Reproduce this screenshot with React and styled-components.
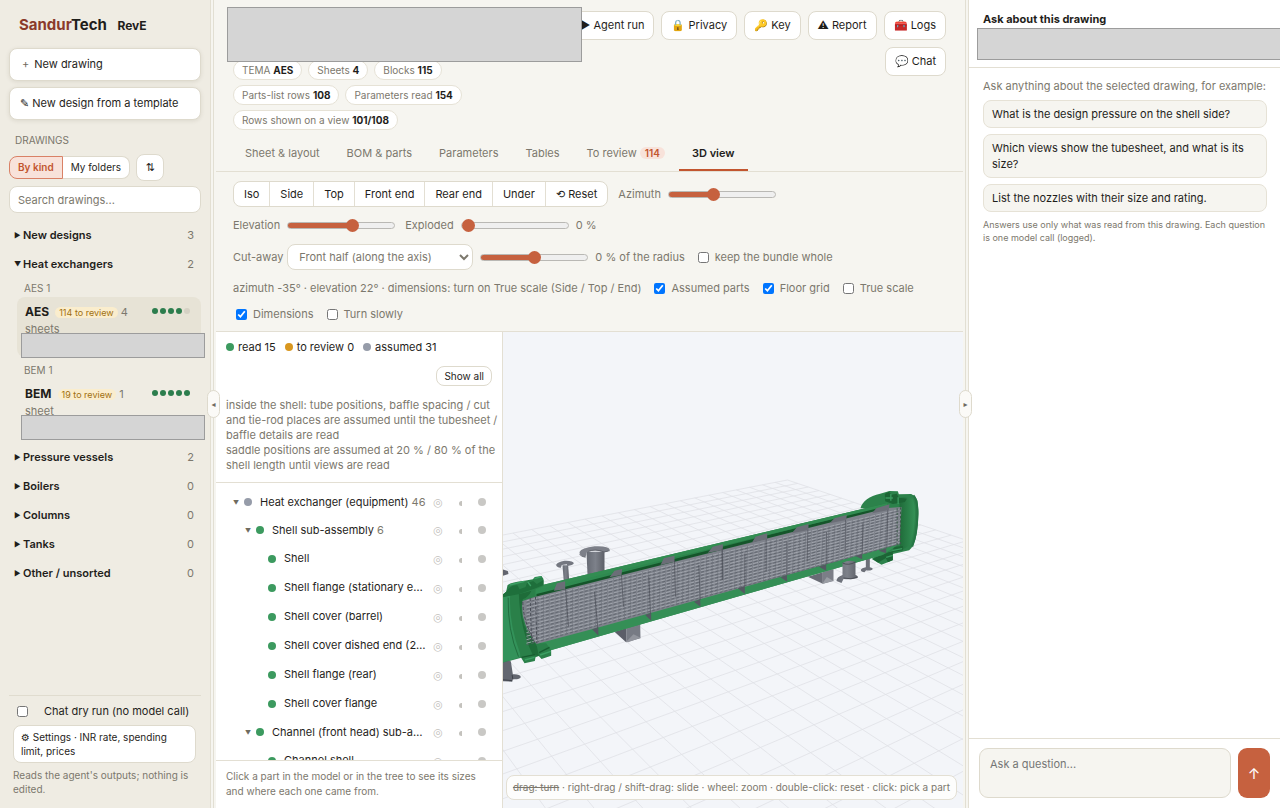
import React, { useState } from 'react'
import styled, { createGlobalStyle, css } from 'styled-components'

const GlobalStyle = createGlobalStyle`
    *{
        box-sizing: border-box;
    }
    body{
        margin: 0;
        background: #f6f5f0;
        color: #1f1e1b;
        font-family: Inter, "DejaVu Sans", sans-serif;
        font-size: 11px;
        line-height: 15px;
    }
    button, input, select, textarea{
        font: inherit;
        color: inherit;
        margin: 0;
    }
    button{
        cursor: pointer;
    }
    p, h1, h2, h3, ul{
        margin: 0;
        padding: 0;
    }
`

const FAR = { x: 788, y: 480 }
const VP_RIGHT = { x: 1900, y: 265 }
const VP_LEFT = { x: 150, y: 265 }
const STEP_U = 0.011
const STEP_V = 0.0157

// perspective floor: u runs away from the right vanishing point, v from the left one
function project(u, v) {
    const a = u * STEP_U
    const b = v * STEP_V
    const w = 1 - a - b
    return [
        (FAR.x - a * VP_RIGHT.x - b * VP_LEFT.x) / w,
        (FAR.y - a * VP_RIGHT.y - b * VP_LEFT.y) / w,
    ].map(n => n.toFixed(1)).join(' ')
}

function floorPath() {
    const parts = []
    for (let u = 0; u * STEP_U < 0.75; u++) {
        parts.push(`M${project(u, 0)}L${project(u, (0.8 - u * STEP_U) / STEP_V)}`)
    }
    for (let v = 0; v * STEP_V < 0.75; v++) {
        parts.push(`M${project(0, v)}L${project((0.8 - v * STEP_V) / STEP_U, v)}`)
    }
    return parts.join('')
}

// tube rows between the bundle's top and bottom edges
const TUBES = Array.from({ length: 13 }, (_, i) => {
    const t = (i + 0.5) / 13
    return `M527 ${(599 + t * 46).toFixed(1)}L900 ${(508 + t * 36).toFixed(1)}`
}).join('')

function Model() {
    return (
        <Drawing viewBox="503 332 461 476" preserveAspectRatio="xMidYMid slice" role="img" aria-label="3D model">
            <defs>
                <linearGradient id="shell" x1="0" y1="0" x2="0" y2="1">
                    <stop offset="0" stopColor="#24733f" />
                    <stop offset="0.5" stopColor="#2f8a50" />
                    <stop offset="1" stopColor="#349459" />
                </linearGradient>
                <linearGradient id="head" x1="0" y1="0" x2="1" y2="0">
                    <stop offset="0" stopColor="#1f6b39" />
                    <stop offset="1" stopColor="#349156" />
                </linearGradient>
                <linearGradient id="pipe" x1="0" y1="0" x2="1" y2="0">
                    <stop offset="0" stopColor="#666a73" />
                    <stop offset="0.5" stopColor="#7d818a" />
                    <stop offset="1" stopColor="#5d6068" />
                </linearGradient>
            </defs>
            <path d={floorPath()} fill="none" stroke="#dfe1e6" strokeWidth="0.8" />

            {/* nozzles and supports behind the shell */}
            <g transform="translate(500 470) scale(.33333)">
                <path d="M8 298L25 303L27 312L8 318Z" fill="#62656e" />
                <path d="M189 286H206L209 332L193 336Z" fill="url(#pipe)" />
                <path d="M170 284Q173 276 195 272Q221 271 223 280Q220 287 204 288L202 283L187 285L184 293Q170 292 170 284Z" fill="#747780" />
                <path d="M261 245H315V302L264 314Z" fill="url(#pipe)" />
                <path d="M240 246Q246 234 285 229Q328 227 331 240Q325 247 312 247Q287 236 262 246L258 262Q239 258 240 246Z" fill="#7d8089" />
                <path d="M240 252Q243 260 258 262M264 245Q288 235 314 246L331 242" fill="none" stroke="#50535b" strokeWidth="2" />
                <path d="M8 568L34 574L40 613Q62 612 64 621Q62 629 40 628L38 635L8 634Z" fill="#636770" />
                <path d="M8 629L38 632M38 615L40 628" stroke="#3f424a" strokeWidth="3" />
                <path d="M345 485L380 474L380 517Z" fill="#5b5e68" />
                <path d="M380 474L422 460L423 505L380 517Z" fill="#777b84" />
                <path d="M380 515L402 493L423 503L386 517Z" fill="#92959d" />
            </g>
            <g transform="translate(720 470) scale(.33333)">
                <path d="M265 320L310 307L310 341Z" fill="#696c75" />
                <path d="M310 306L342 297V333L310 341Z" fill="#7b7e87" />
                <path d="M310 339L322 321L341 332L310 341Z" fill="#9a9da4" />
                <path d="M439 265H451V292Q463 295 458 299Q449 303 440 301L435 307Q425 306 424 300Q426 294 439 292Z" fill="#6d7079" />
            </g>

            {/* rear head */}
            <g transform="translate(720 470) scale(.33333)">
                <path d="M423 115C428 94 450 78 482 71L510 63L535 64L538 73L575 72Q589 78 594 92Q600 140 592 190Q585 228 569 241L520 252V271L486 284L457 267L505 225L505 120Z" fill="#2c824b" />
                <path d="M540 84Q560 79 579 86Q588 100 586 145Q583 198 571 224Q558 237 541 239Z" fill="url(#head)" />
                <path d="M582 76Q594 90 594 130Q592 195 578 230" fill="none" stroke="#257544" strokeWidth="6" />
                <path d="M496 72L508 65L516 74L532 71L538 83L562 86L556 96L520 102L497 94ZM505 232L550 228L551 241L520 246V270L505 277L499 264L476 278L460 267L500 246Z" fill="#1c6535" />
                <path d="M498 84H520M514 72V92M536 82V102M500 262L520 256M505 244L548 236" stroke="#3b9b60" strokeWidth="4" />
            </g>

            {/* shell halved along its axis */}
            <path d="M543 585L888 503L894 550L883 555L552 650L530 652L530 590Z" fill="url(#shell)" />
            <path d="M537 594L888 505V510L537 600Z" fill="#15552a" />
            <path d="M543 585L888 503V506L543 589Z" fill="#328d52" />
            <path d="M537 644L900 544L883 555L552 650Z" fill="#358f56" />
            <path d="M843 563Q850 559 856 562V575Q859 576 858 578Q852 580 844 579L842 583L837 581Q837 577 843 575Z" fill="url(#pipe)" />
            <path d="M843 563Q849 566 856 562M844 578Q852 580 858 577" fill="none" stroke="#4d5058" />

            {/* front channel */}
            <g transform="translate(500 470) scale(.33333)">
                <path d="M8 376L20 365L24 346Q33 336 75 332L100 328L106 321L126 318L132 327V348L108 358L108 520L140 520L155 540V557L126 567L118 558L108 562L106 573L75 580L65 563L8 578Z" fill="#2a8049" />
                <path d="M8 382Q28 375 32 374Q27 460 62 551L62 562L8 578Z" fill="#33925a" />
                <path d="M26 383Q24 480 57 560" fill="none" stroke="#185c31" strokeWidth="2" />
                <path d="M58 373L96 362Q88 380 70 388Q60 420 75 468L112 528L118 558L100 555Q62 480 58 373Z" fill="#1e6c39" />
                <path d="M20 365Q35 343 54 346L60 358L78 351L82 340L101 333L112 342L132 330V345L104 356L60 372L8 382V375Z" fill="#1e6f3b" />
                <path d="M30 345L75 334M85 336L94 348M105 326L126 320M76 570L105 562M122 555L154 544" stroke="#3ca064" strokeWidth="4" />
                <path d="M66 562L106 554M119 548L150 532" stroke="#175c30" strokeWidth="4" />
            </g>

            {/* tube bundle */}
            <path d="M523 601L535 597L888 508L902 507L900 544L597 628L537 644Q520 622 523 601Z" fill="#7e828b" />
            <path d={TUBES} fill="none" stroke="#a0a4ac" strokeWidth="1" strokeDasharray="5 1" />
            <path d={TUBES} fill="none" stroke="#5b5f68" strokeWidth="0.8" strokeDasharray="3 2" transform="translate(0 1.5)" />
            <g transform="translate(500 470) scale(.33333)">
                <path d="M70 396Q70 450 106 518M92 384L96 512M108 380L112 520" fill="none" stroke="#474b54" strokeWidth="3" strokeDasharray="9 6" />
                <path d="M163 362L172 340L197 334V358ZM330 322L345 302L368 297L366 315ZM483 285L493 265L525 257V275ZM625 248L640 230L670 223V240Z" fill="#6b6e77" />
                <path d="M278 478L296 472L297 497ZM437 435L455 428V452ZM583 395L602 388L603 410Z" fill="#555862" />
                <path d="M198 355L207 470M285 365L295 475M366 315L372 410M448 320L453 430M525 270L528 380M598 285L602 390M668 235L670 330" stroke="#484b54" strokeWidth="2" />
            </g>
            <g transform="translate(720 470) scale(.33333)">
                <path d="M0 232L8 223V238L0 240ZM97 218L108 200L143 190V207ZM217 190L232 172L267 162V180ZM330 160L345 145L382 135L380 150ZM458 130L470 115L510 103L508 120Z" fill="#6b6e77" />
                <path d="M55 355L76 348V372ZM183 322L202 315L203 335ZM298 290L320 283V302ZM408 258L428 252V268ZM478 242L500 235V250Z" fill="#555862" />
                <path d="M8 235V330M76 250V348M140 207V305M202 215V315M265 180L263 275M321 185L320 283M378 150L377 245M430 160L428 252M505 120L502 235" stroke="#50535c" strokeWidth="2" />
                <path d="M533 115V232M543 112V226" stroke="#3d5a4a" strokeWidth="3" strokeDasharray="7 6" />
            </g>
        </Drawing>
    )
}

const MORE_GROUPS = [
    { name: 'Pressure vessels', count: 2 },
    { name: 'Boilers', count: 0 },
    { name: 'Columns', count: 0 },
    { name: 'Tanks', count: 0 },
    { name: 'Other / unsorted', count: 0 },
]

const PARTS = [
    { name: 'Heat exchanger (equipment)', count: 46, level: 0, color: '#969ca9', open: true },
    { name: 'Shell sub-assembly', count: 6, level: 1, open: true },
    { name: 'Shell', level: 2 },
    { name: 'Shell flange (stationary end)', level: 2 },
    { name: 'Shell cover (barrel)', level: 2 },
    { name: 'Shell cover dished end (2:1)', level: 2 },
    { name: 'Shell flange (rear)', level: 2 },
    { name: 'Shell cover flange', level: 2 },
    { name: 'Channel (front head) sub-assembly', level: 1, open: true },
    { name: 'Channel shell', level: 2 },
]

function DrawingEntry({ name, review, sheets, word, done, active }) {
    return (
        <DrawingItem $active={active}>
            <div className="line">
                <span><b>{name}</b> <mark>{review} to review</mark> <span className="muted">{sheets} {word}</span></span>
                <span className="steps">
                    {[0, 1, 2, 3, 4].map(i => <Step key={i} $on={i < done} />)}
                </span>
            </div>
            <Cover />
        </DrawingItem>
    )
}

function Group({ name, count, open }) {
    return (
        <GroupButton type="button" aria-expanded={!!open}>
            <i>{open ? '▼' : '▶'}</i>
            <span>{name}</span>
            <small>{count}</small>
        </GroupButton>
    )
}

function Sidebar() {
    return (
        <Side>
            <Brand><span>Sandur</span>Tech <small>RevE</small></Brand>
            <BigButton type="button"><i>+</i>New drawing</BigButton>
            <BigButton type="button">✎ New design from a template</BigButton>
            <Label>DRAWINGS</Label>
            <KindRow>
                <Kinds>
                    <button type="button" className="active">By kind</button>
                    <button type="button">My folders</button>
                </Kinds>
                <SortButton type="button" aria-label="Sort">⇅</SortButton>
            </KindRow>
            <Search type="search" placeholder="Search drawings..." aria-label="Search drawings" />
            <Groups>
                <Group name="New designs" count={3} />
                <Group name="Heat exchangers" count={2} open />
                <SubLabel>AES 1</SubLabel>
                <DrawingEntry name="AES" review={114} sheets={4} word="sheets" done={4} active />
                <SubLabel>BEM 1</SubLabel>
                <DrawingEntry name="BEM" review={19} sheets={1} word="sheet" done={5} />
                {MORE_GROUPS.map(g => <Group key={g.name} {...g} />)}
            </Groups>
            <SideFooter>
                <label><input type="checkbox" /><span>Chat dry run (no model call)</span></label>
                <button type="button">⚙ Settings · INR rate, spending limit, prices</button>
                <p>Reads the agent's outputs; nothing is edited.</p>
            </SideFooter>
        </Side>
    )
}

function Slider({ label, value: initial }) {
    const [value, setValue] = useState(initial)
    return (
        <Range
            type="range"
            aria-label={label}
            value={value}
            onChange={e => setValue(Number(e.target.value))}
            style={{ '--fill': `${value}%` }}
        />
    )
}

function Check({ label, checked }) {
    return (
        <CheckLabel>
            <input type="checkbox" defaultChecked={checked} />
            {label}
        </CheckLabel>
    )
}

function Toolbar() {
    return (
        <Tools>
            <ToolRow $height={26}>
                <Views>
                    {['Iso', 'Side', 'Top', 'Front end', 'Rear end', 'Under', '⟲ Reset'].map(v => (
                        <button type="button" key={v}>{v}</button>
                    ))}
                </Views>
                <Field>Azimuth <Slider label="Azimuth" value={41} /></Field>
            </ToolRow>
            <ToolRow $height={25}>
                <Field>Elevation <Slider label="Elevation" value={62} /></Field>
                <Field>Exploded <Slider label="Exploded" value={0} /> 0 %</Field>
            </ToolRow>
            <ToolRow $height={26}>
                <Field $gap={4}>
                    <label htmlFor="cut">Cut-away</label>
                    <Select id="cut"><option>Front half (along the axis)</option></Select>
                </Field>
                <Field className="near"><Slider label="Cut depth" value={50} /> 0 % of the radius</Field>
                <Check label="keep the bundle whole" />
            </ToolRow>
            <ToolRow $height={24}>
                <span>azimuth -35° · elevation 22° · dimensions: turn on True scale (Side / Top / End)</span>
                <Check label="Assumed parts" checked />
                <Check label="Floor grid" checked />
                <Check label="True scale" />
            </ToolRow>
            <ToolRow $height={16}>
                <Check label="Dimensions" checked />
                <Check label="Turn slowly" />
            </ToolRow>
        </Tools>
    )
}

function PartsPanel() {
    return (
        <Parts>
            <Legend>
                <span><Dot $color="#3c9a5f" />read 15</span>
                <span><Dot $color="#d9971f" />to review 0</span>
                <span><Dot $color="#969ca9" />assumed 31</span>
                <button type="button">Show all</button>
            </Legend>
            <Notes>
                <p>inside the shell: tube positions, baffle spacing / cut and tie-rod places are assumed until the tubesheet / baffle details are read</p>
                <p>saddle positions are assumed at 20 % / 80 % of the shell length until views are read</p>
            </Notes>
            <Tree>
                {PARTS.map(part => (
                    <TreeRow key={part.name} $level={part.level} $branch={part.open}>
                        <span className="arrow">{part.open ? '▼' : ''}</span>
                        <Dot $color={part.color || '#3c9a5f'} />
                        <span className="name">{part.name}{part.count && <small> {part.count}</small>}</span>
                        <button type="button" aria-label="Isolate">◎</button>
                        <button type="button" aria-label="Fade"><HalfDot /></button>
                        <button type="button" aria-label="Hide"><Dot $color="#c9c8c5" /></button>
                    </TreeRow>
                ))}
            </Tree>
            <Detail>Click a part in the model or in the tree to see its sizes and where each one came from.</Detail>
        </Parts>
    )
}

function Main() {
    return (
        <Center>
            <Header>
                <HeaderInfo>
                    <TitleSpace><Cover /></TitleSpace>
                    <Chips>
                        <li>TEMA <b>AES</b></li>
                        <li>Sheets <b>4</b></li>
                        <li>Blocks <b>115</b></li>
                        <li>Parts-list rows <b>108</b></li>
                        <li>Parameters read <b>154</b></li>
                        <li>Rows shown on a view <b>101/108</b></li>
                    </Chips>
                </HeaderInfo>
                <Actions>
                    <button type="button">▶ Agent run</button>
                    <button type="button">🔒 Privacy</button>
                    <button type="button">🔑 Key</button>
                    <button type="button">⚠ Report</button>
                    <button type="button">🧰 Logs</button>
                    <button type="button">💬 Chat</button>
                </Actions>
            </Header>
            <Tabs>
                <button type="button">Sheet &amp; layout</button>
                <button type="button">BOM &amp; parts</button>
                <button type="button">Parameters</button>
                <button type="button">Tables</button>
                <button type="button">To review <em>114</em></button>
                <button type="button" className="active">3D view</button>
            </Tabs>
            <Toolbar />
            <Workspace>
                <PartsPanel />
                <Viewer>
                    <Model />
                    <Hint><s>drag: turn</s> · right-drag / shift-drag: slide · wheel: zoom · double-click: reset · click: pick a part</Hint>
                </Viewer>
            </Workspace>
        </Center>
    )
}

function Chat() {
    return (
        <ChatPanel>
            <ChatHeader>
                <h2>Ask about this drawing</h2>
                <Cover />
            </ChatHeader>
            <ChatBody>
                <p>Ask anything about the selected drawing, for example:</p>
                <button type="button">What is the design pressure on the shell side?</button>
                <button type="button">Which views show the tubesheet, and what is its size?</button>
                <button type="button">List the nozzles with their size and rating.</button>
                <small>Answers use only what was read from this drawing. Each question is one model call (logged).</small>
            </ChatBody>
            <Composer>
                <textarea placeholder="Ask a question..." aria-label="Ask a question" />
                <button type="button" aria-label="Send">↑</button>
            </Composer>
        </ChatPanel>
    )
}

function App() {
    return (
        <Shell>
            <GlobalStyle />
            <Sidebar />
            <Splitter><button type="button" aria-label="Collapse drawings">◂</button></Splitter>
            <Main />
            <Splitter><button type="button" aria-label="Collapse chat">▸</button></Splitter>
            <Chat />
        </Shell>
    )
}

const control = css`
    background: #fff;
    border: 1px solid #dedacd;
    border-radius: 8px;
`

const Shell = styled.div`
    display: grid;
    grid-template-columns: 211px 5px minmax(0, 1fr) 5px 312px;
    grid-template-rows: minmax(0, 1fr);
    height: 100vh;
    overflow: hidden;
`

const Splitter = styled.div`
    position: relative;
    background: linear-gradient(90deg, transparent 2px, #e2dfd3 2px, #e2dfd3 3px, transparent 3px);
    button{
        position: absolute;
        z-index: 3;
        top: 390px;
        left: -4px;
        width: 13px;
        height: 28px;
        padding: 0;
        border: 1px solid #dedacd;
        border-radius: 7px;
        background: #fbfaf7;
        color: #6f6b60;
        font-size: 8px;
    }
`

// grey block over withheld text
const Cover = styled.div`
    position: absolute;
    z-index: 2;
    background: #d5d5d5;
    border: 1px solid #9c9c9c;
`

const Side = styled.aside`
    display: flex;
    flex-direction: column;
    padding: 0 9px;
    background: #efece3;
    border-right: 1px solid #e3dfd2;
`

const Brand = styled.h1`
    padding: 14px 10px 11px;
    font-size: 15px;
    line-height: 22px;
    span{
        color: #8b3a2b;
    }
    small{
        margin-left: 7px;
        font-size: 12px;
    }
`

const BigButton = styled.button`
    ${control}
    flex: none;
    height: 33px;
    margin-bottom: 6px;
    padding: 0 10px;
    text-align: left;
    box-shadow: 0 1px 4px rgba(60, 50, 20, .1);
    i{
        margin: 0 5px 0 2px;
        color: #6f6b60;
        font-style: normal;
    }
`

const Label = styled.h3`
    padding: 7px 6px 6px;
    color: #7a766b;
    font-size: 10px;
    font-weight: 400;
`

const KindRow = styled.div`
    display: flex;
    align-items: center;
    gap: 6px;
`

const Kinds = styled.div`
    display: flex;
    font-size: 10px;
    button{
        height: 23px;
        padding: 0 8px;
        border: 1px solid #dedacd;
        border-left: 0;
        border-radius: 0 8px 8px 0;
        background: #fff;
    }
    .active{
        border: 1px solid #d98166;
        border-radius: 8px 0 0 8px;
        background: #f8e2da;
        color: #c2552f;
        font-weight: 600;
    }
`

const SortButton = styled.button`
    ${control}
    width: 28px;
    height: 27px;
    padding: 0;
`

const Search = styled.input`
    ${control}
    flex: none;
    width: 100%;
    height: 27px;
    margin-top: 5px;
    padding: 0 8px;
    &::placeholder{
        color: #7c786d;
    }
`

const Groups = styled.nav`
    display: flex;
    flex: 1;
    flex-direction: column;
    min-height: 0;
    padding-top: 8px;
`

const GroupButton = styled.button`
    display: flex;
    flex: none;
    align-items: center;
    height: 29px;
    padding: 0 7px 0 5px;
    border: 0;
    background: none;
    font-weight: 600;
    i{
        width: 9px;
        font-size: 7px;
        font-style: normal;
        text-align: left;
    }
    small{
        margin-left: auto;
        color: #7c786d;
        font-size: 11px;
        font-weight: 400;
    }
`

const SubLabel = styled.p`
    padding: 2px 15px 1px;
    color: #7c786d;
    font-size: 10px;
`

const DrawingItem = styled.div`
    position: relative;
    flex: none;
    height: 60px;
    margin: 0 0 4px 8px;
    padding: 6px 11px 0 8px;
    border-radius: 8px;
    background: ${({ $active }) => $active ? '#e7e3d6' : 'transparent'};
    .line{
        display: flex;
        justify-content: space-between;
        gap: 10px;
        line-height: 17px;
    }
    b{
        margin-right: 3px;
        font-size: 12px;
        font-weight: 700;
    }
    mark{
        padding: 0 4px;
        border-radius: 6px;
        background: #faedcd;
        color: #a1700f;
        font-size: 9px;
    }
    .muted{
        color: #7c786d;
    }
    .steps{
        display: flex;
        gap: 2px;
        padding-top: 5px;
    }
    ${Cover}{
        top: 36px;
        left: 4px;
        right: -4px;
        height: 25px;
    }
`

const Step = styled.span`
    width: 6px;
    height: 6px;
    border-radius: 50%;
    background: ${({ $on }) => $on ? '#2c7d4d' : '#d5d1c4'};
`

const SideFooter = styled.footer`
    padding: 7px 5px 12px 4px;
    border-top: 1px solid #e0dccf;
    font-size: 10px;
    line-height: 14px;
    label{
        display: flex;
        align-items: center;
        gap: 16px;
        padding: 0 4px;
        font-size: 11px;
        line-height: 16px;
    }
    input{
        width: 11px;
        height: 11px;
    }
    button{
        ${control}
        width: 100%;
        margin: 6px 0 5px;
        padding: 4px 7px;
        text-align: left;
    }
    p{
        color: #7c786d;
    }
`

const Center = styled.main`
    display: flex;
    flex-direction: column;
    min-width: 0;
    min-height: 0;
`

const Header = styled.header`
    display: flex;
    gap: 16px;
    padding: 11px 17px 5px;
`

const HeaderInfo = styled.div`
    position: relative;
    flex: 0 0 300px;
`

const TitleSpace = styled.div`
    height: 49px;
    ${Cover}{
        top: -4px;
        left: -6px;
        width: 355px;
        height: 55px;
    }
`

const Chips = styled.ul`
    display: flex;
    flex-wrap: wrap;
    gap: 5px 6px;
    list-style: none;
    li{
        height: 20px;
        padding: 0 8px;
        border: 1px solid #e6e2d6;
        border-radius: 10px;
        background: #fff;
        color: #7c786d;
        font-size: 10px;
        line-height: 18px;
    }
    b{
        color: #1f1e1b;
    }
`

const Actions = styled.div`
    display: flex;
    flex: 1;
    flex-wrap: wrap;
    align-content: flex-start;
    justify-content: flex-end;
    gap: 7px;
    button{
        ${control}
        height: 29px;
        padding: 0 9px;
    }
`

const Tabs = styled.nav`
    display: flex;
    gap: 1px;
    padding: 0 16px;
    border-bottom: 1px solid #e3dfd3;
    button{
        height: 36px;
        padding: 2px 13px 0;
        border: 0;
        border-bottom: 2px solid transparent;
        background: none;
        color: #7c786d;
    }
    .active{
        border-color: #c2552f;
        color: #1f1e1b;
        font-weight: 600;
    }
    em{
        padding: 0 5px;
        border-radius: 6px;
        background: #f8e2da;
        color: #c2552f;
        font-size: 10px;
        font-style: normal;
        font-weight: 600;
    }
`

const Tools = styled.div`
    display: flex;
    flex-direction: column;
    gap: 6px;
    padding: 9px 17px;
    border-bottom: 1px solid #e3dfd3;
    color: #7c786d;
`

const ToolRow = styled.div`
    display: flex;
    align-items: center;
    gap: 10px;
    min-height: ${({ $height }) => $height}px;
    .near{
        margin-left: -3px;
    }
`

const Views = styled.div`
    ${control}
    display: flex;
    overflow: hidden;
    button{
        height: 24px;
        padding: 0 10px;
        border: 0;
        background: none;
        color: #1f1e1b;
    }
    button + button{
        border-left: 1px solid #e3dfd3;
    }
`

const Field = styled.div`
    display: flex;
    align-items: center;
    gap: ${({ $gap }) => $gap || 7}px;
`

const Range = styled.input`
    appearance: none;
    width: 108px;
    height: 7px;
    border: 1px solid #b9b8b4;
    border-radius: 4px;
    background: linear-gradient(90deg, #c6613f var(--fill), #efefef var(--fill));
    &::-webkit-slider-thumb{
        appearance: none;
        width: 13px;
        height: 13px;
        border-radius: 50%;
        background: #c6613f;
    }
`

const Select = styled.select`
    ${control}
    width: 186px;
    height: 26px;
    padding: 0 7px;
`

const CheckLabel = styled.label`
    display: flex;
    align-items: center;
    gap: 6px;
    padding-left: 3px;
    white-space: nowrap;
    input{
        width: 11px;
        height: 11px;
    }
`

const Workspace = styled.section`
    display: grid;
    flex: 1;
    grid-template-columns: 287px minmax(0, 1fr);
    grid-template-rows: minmax(0, 1fr);
    min-height: 0;
`

const Parts = styled.div`
    display: flex;
    flex-direction: column;
    min-height: 0;
    border-right: 1px solid #e3dfd3;
    background: #fff;
`

const Dot = styled.span`
    display: inline-block;
    flex: none;
    width: 8px;
    height: 8px;
    border-radius: 50%;
    background: ${({ $color }) => $color};
`

const HalfDot = styled.span`
    display: inline-block;
    width: 3px;
    height: 5px;
    border-radius: 3px 0 0 3px;
    background: #c4c2bd;
`

const Legend = styled.div`
    display: flex;
    flex-wrap: wrap;
    gap: 11px 9px;
    padding: 8px 10px 9px;
    ${Dot}{
        margin-right: 4px;
    }
    button{
        ${control}
        height: 20px;
        margin-left: auto;
        padding: 0 7px;
        font-size: 10px;
    }
`

const Notes = styled.div`
    padding: 3px 3px 9px 10px;
    border-bottom: 1px solid #e3dfd3;
    color: #7c786d;
`

const Tree = styled.div`
    flex: 1;
    min-height: 0;
    overflow: hidden;
    padding: 5px 9px 0 14px;
`

const TreeRow = styled.div`
    display: flex;
    align-items: center;
    height: ${({ $branch }) => $branch ? 28 : 29}px;
    padding-left: ${({ $level }) => $level * 12}px;
    .arrow{
        width: 14px;
        padding-left: 3px;
        color: #6f6b60;
        font-size: 6px;
    }
    .name{
        flex: 1;
        overflow: hidden;
        padding-left: 8px;
        text-overflow: ellipsis;
        white-space: nowrap;
    }
    small{
        color: #7c786d;
        font-size: 11px;
    }
    button{
        flex: none;
        width: 22px;
        padding: 0;
        border: 0;
        background: none;
        color: #c4c2bd;
        line-height: 12px;
    }
`

const Detail = styled.p`
    padding: 8px 10px 9px;
    border-top: 1px solid #e3dfd3;
    color: #7c786d;
    font-size: 10px;
`

const Viewer = styled.div`
    position: relative;
    min-width: 0;
    overflow: hidden;
    background: #f3f5f9;
`

const Drawing = styled.svg`
    position: absolute;
    width: 100%;
    height: 100%;
`

const Hint = styled.p`
    position: absolute;
    right: 6px;
    bottom: 8px;
    padding: 4px 6px;
    border: 1px solid #e3dfd3;
    border-radius: 8px;
    background: #fdfdfc;
    color: #7c786d;
    font-size: 10px;
    white-space: nowrap;
`

const ChatPanel = styled.aside`
    display: flex;
    flex-direction: column;
    min-width: 0;
    border-left: 1px solid #e3dfd3;
    background: #fff;
`

const ChatHeader = styled.header`
    position: relative;
    height: 68px;
    padding: 12px 14px;
    border-bottom: 1px solid #e3dfd3;
    h2{
        font-size: 11px;
    }
    ${Cover}{
        top: 28px;
        left: 8px;
        right: -2px;
        height: 32px;
    }
`

const ChatBody = styled.div`
    display: flex;
    flex: 1;
    flex-direction: column;
    gap: 6px;
    padding: 11px 13px 11px 14px;
    color: #7c786d;
    button{
        padding: 5px 8px;
        border: 1px solid #e6e2d6;
        border-radius: 8px;
        background: #f6f5f0;
        color: #1f1e1b;
        line-height: 16px;
        text-align: left;
    }
    small{
        font-size: 9px;
        line-height: 13px;
    }
`

const Composer = styled.form`
    display: flex;
    gap: 7px;
    padding: 9px 10px 10px;
    border-top: 1px solid #e3dfd3;
    textarea{
        flex: 1;
        min-width: 0;
        height: 50px;
        padding: 8px 10px;
        border: 1px solid #dedacd;
        border-radius: 9px;
        background: #f6f5f0;
        resize: none;
    }
    button{
        width: 32px;
        padding: 0;
        border: 0;
        border-radius: 9px;
        background: #c6613f;
        color: #fff;
        font-size: 15px;
    }
`

export default App
